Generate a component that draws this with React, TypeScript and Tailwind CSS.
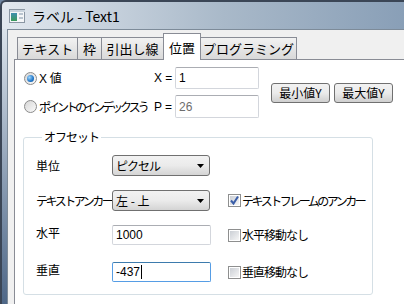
import React from "react";

const JP = "font-['Noto_Sans_CJK_JP','Noto_Sans',sans-serif]";

function WinIcon() {
  return (
    <svg width="16" height="14" viewBox="0 0 16 14">
      <rect x="0.5" y="0.5" width="15" height="13" fill="#f4f6f8" stroke="#8a96a3" />
      <rect x="1" y="1" width="15" height="2" fill="#c9d3dd" />
      <defs>
        <linearGradient id="ig" x1="0" y1="0" x2="0" y2="1">
          <stop offset="0" stopColor="#3f8fb0" />
          <stop offset="1" stopColor="#3a9a5a" />
        </linearGradient>
      </defs>
      <rect x="2" y="4" width="6" height="8" fill="url(#ig)" />
      <rect x="10" y="4" width="4" height="2" fill="#b9c4cf" />
      <rect x="10" y="8" width="4" height="2" fill="#b9c4cf" />
    </svg>
  );
}

function Tab({ label, w, active }: { label: string; w: number; active?: boolean }) {
  return (
    <div
      style={{ width: w }}
      className={
        active
          ? "relative z-10 -ml-px -mb-px flex h-[27px] items-start justify-center border border-b-0 border-[#898c95] bg-white pt-[4px] text-[13px]"
          : "-ml-px flex h-[22px] items-start justify-center border border-b-0 border-[#898c95] bg-gradient-to-b from-[#f2f2f2] to-[#d9d9d9] pt-[1px] text-[13px] first:ml-0"
      }
    >
      {label}
    </div>
  );
}

function Radio({ on }: { on?: boolean }) {
  return (
    <span className="flex h-[13px] w-[13px] shrink-0 items-center justify-center rounded-full border border-[#8b8b8b] bg-gradient-to-br from-[#d6d6d6] to-[#fbfbfb]">
      {on && (
        <span className="h-[7px] w-[7px] rounded-full bg-[radial-gradient(circle_at_35%_35%,#9fd6fb,#1f76c9_60%,#0d4f96)]" />
      )}
    </span>
  );
}

function Check({ on }: { on?: boolean }) {
  return (
    <span className="flex h-[13px] w-[13px] shrink-0 items-center justify-center border border-[#8e8f8f] bg-white">
      <span className="relative flex h-[9px] w-[9px] items-center justify-center bg-gradient-to-br from-[#cbcfd5] to-[#f6f6f6]">
        {on && (
          <svg width="11" height="11" viewBox="0 0 11 11" className="absolute -top-[1px] -left-[1px]">
            <path d="M2 5.5 L4.5 8.5 L9 1.5" fill="none" stroke="#3a5ea8" strokeWidth="2" />
          </svg>
        )}
      </span>
    </span>
  );
}

function Select({ value, tight }: { value: string; tight?: boolean }) {
  return (
    <div className="flex h-[21px] w-[98px] items-center justify-between rounded-[3px] border border-[#707070] bg-gradient-to-b from-[#f2f2f2] via-[#ebebeb] to-[#d4d4d4] pr-[5px] pl-[3px] text-[12px]">
      <span className={tight ? "tracking-[-1px]" : ""}>{value}</span>
      <svg width="7" height="4" viewBox="0 0 7 4">
        <path d="M0 0 H7 L3.5 4 Z" fill="#000" />
      </svg>
    </div>
  );
}

function Field({
  value,
  w,
  h,
  muted,
  focus,
}: {
  value: string;
  w: number;
  h: number;
  muted?: boolean;
  focus?: boolean;
}) {
  return (
    <div
      style={{ width: w, height: h }}
      className={
        "flex items-center rounded-[2px] border bg-white pl-[3px] text-[12px] " +
        (focus
          ? "border-[#569de5] border-t-[#3d7bad]"
          : "border-[#d3d6dc] border-t-[#abadb3]") +
        (muted ? " text-[#6d6d6d]" : " text-black")
      }
    >
      <span className="font-['Liberation_Sans',sans-serif]">{value}</span>
      {focus && <span className="ml-px h-[14px] w-px bg-black" />}
    </div>
  );
}

function Btn({ label }: { label: string }) {
  return (
    <div className="flex h-[20px] w-[59px] items-center justify-center rounded-[3px] border border-[#707070] bg-gradient-to-b from-[#f2f2f2] via-[#ebebeb] to-[#cfcfcf] text-[12px]">
      {label}
    </div>
  );
}

export default function App() {
  return (
    <div className={`${JP} flex h-[304px] w-[404px] flex-col overflow-hidden bg-[#6f86a2] text-black`}>
      {/* title bar */}
      <div className="flex h-[29px] shrink-0 items-center gap-[7px] rounded-tl-[6px] border-t-2 border-l-2 border-[#3b4656] bg-gradient-to-r from-[#e2e8ef] via-[#a9b9c9] via-55% to-[#899fb7] pl-[7px]">
        <WinIcon />
        <span className="text-[14px] leading-none text-black">ラベル - Text1</span>
      </div>
      <div className="flex flex-1">
        <div className="w-[7px] shrink-0 border-l-2 border-[#3b4656] bg-gradient-to-b from-[#dbe3eb] to-[#4e6787]" />
        {/* client */}
        <div className="flex flex-1 flex-col border-t border-l border-[#7d8b99] bg-[#f0f0f0] pt-[3px] pl-[6px]">
          <div className="flex items-end pl-[3px]">
            <Tab label="テキスト" w={61} />
            <Tab label="枠" w={25} />
            <Tab label="引出し線" w={63} />
            <Tab label="位置" w={38} active />
            <Tab label="プログラミング" w={97} />
          </div>
          {/* panel */}
          <div className="flex flex-1 flex-col border-t border-l border-[#898c95] bg-white pt-[7px] pl-[8px]">
            <div className="flex items-center">
              <div className="flex flex-col gap-[6px]">
                <div className="flex h-[22px] items-center">
                  <div className="flex w-[131px] items-center gap-[2px] pl-[1px] text-[12px]">
                    <Radio on />
                    <span>
                      <span className="font-['Liberation_Sans',sans-serif] text-[12px]">X</span> 値
                    </span>
                  </div>
                  <span className="w-[21px] text-[12px] font-['Liberation_Sans',sans-serif]">X =</span>
                  <Field value="1" w={84} h={22} />
                </div>
                <div className="flex h-[23px] items-center">
                  <div className="flex w-[131px] items-center gap-[2px] pl-[1px] text-[12px]">
                    <Radio />
                    <span className="w-[112px] whitespace-nowrap tracking-[-3px]">
                      ポイントのインデックスう
                    </span>
                  </div>
                  <span className="w-[21px] text-[12px] font-['Liberation_Sans',sans-serif]">P =</span>
                  <Field value="26" w={84} h={23} muted />
                </div>
              </div>
              <div className="ml-[12px] flex gap-[4px]">
                <Btn label="最小値Y" />
                <Btn label="最大値Y" />
              </div>
            </div>

            <fieldset className="mt-[11px] w-[350px] rounded-[3px] border border-[#d5dfe5] pt-[10px] pb-[12px] pl-[12px]">
              <legend className="ml-[6px] px-[2px] text-[12px] leading-[16px] tracking-[-1px]">オフセット</legend>
              <div className="grid grid-cols-[76px_98px_18px_auto] items-center text-[12px]">
                <span className="row-start-1">単位</span>
                <Select value="ピクセル" tight />
                <span />
                <span />

                <span className="mt-[14px] whitespace-nowrap tracking-[-2.5px]">テキストアンカー</span>
                <div className="mt-[14px]">
                  <Select value="左 - 上" />
                </div>
                <span />
                <div className="mt-[14px] flex items-center gap-[1px]">
                  <Check on />
                  <span className="whitespace-nowrap tracking-[-2.5px]">テキストフレームのアンカー</span>
                </div>

                <span className="mt-[14px] -translate-y-[2px]">水平</span>
                <div className="mt-[14px]">
                  <Field value="1000" w={99} h={20} />
                </div>
                <span />
                <div className="mt-[14px] flex items-center gap-[1px]">
                  <Check />
                  <span className="whitespace-nowrap tracking-[-1px]">水平移動なし</span>
                </div>

                <span className="mt-[17px] -translate-y-[2px]">垂直</span>
                <div className="mt-[17px]">
                  <Field value="-437" w={99} h={20} focus />
                </div>
                <span />
                <div className="mt-[17px] flex items-center gap-[1px]">
                  <Check />
                  <span className="whitespace-nowrap tracking-[-1px]">垂直移動なし</span>
                </div>
              </div>
            </fieldset>
          </div>
        </div>
      </div>
    </div>
  );
}
